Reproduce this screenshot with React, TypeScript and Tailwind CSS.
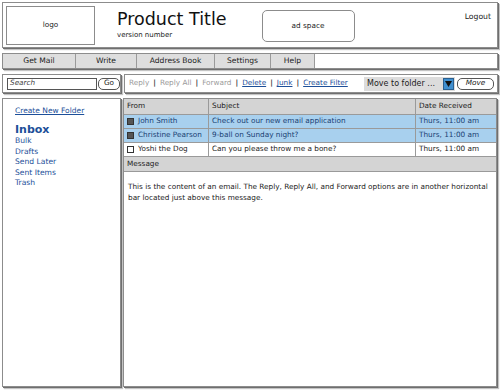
import React from 'react';

const panel = 'border border-[#8c8c8c] bg-white shadow-[1px_1px_0_#6f6f6f,2px_2px_1px_#c4c4c4]';
const link = 'text-[#1d4f99] underline';

interface Mail {
  from: string;
  subject: string;
  date: string;
  unread: boolean;
}

const mails: Mail[] = [
  { from: 'John Smith', subject: 'Check out our new email application', date: 'Thurs, 11:00 am', unread: true },
  { from: 'Christine Pearson', subject: '9-ball on Sunday night?', date: 'Thurs, 11:00 am', unread: true },
  { from: 'Yoshi the Dog', subject: 'Can you please throw me a bone?', date: 'Thurs, 11:00 am', unread: false },
];

const navItems = [
  { label: 'Get Mail', w: 'w-[73px]' },
  { label: 'Write', w: 'w-[61px]' },
  { label: 'Address Book', w: 'w-[78px]' },
  { label: 'Settings', w: 'w-[56px]' },
  { label: 'Help', w: 'w-[44px]' },
];

const folders = ['Bulk', 'Drafts', 'Send Later', 'Sent Items', 'Trash'];

function Sep() {
  return <span className="mx-[4px] text-[#444] font-bold">|</span>;
}

export default function App(): JSX.Element {
  return (
    <div className="w-[500px] h-[390px] bg-white text-[#222] flex flex-col px-[2px] pt-[2px] font-['DejaVu_Sans',sans-serif] text-[7.3px] whitespace-nowrap overflow-hidden">
      {/* header */}
      <div className={`${panel} h-[46px] flex items-start pl-[3px] pt-[3px] pr-[6px]`}>
        <div className="w-[89px] h-[39px] border border-[#8c8c8c] flex items-center justify-center">logo</div>
        <div className="ml-[22px] mt-[5px] leading-none">
          <div className="text-[17.5px] text-[#111]">Product Title</div>
          <div className="text-[7px] mt-[3px]">version number</div>
        </div>
        <div className="ml-[35px] mt-[4px] w-[93px] h-[32px] border border-[#8c8c8c] rounded-[5px] flex items-center justify-center">ad space</div>
        <div className="ml-auto mt-[5px] text-[7.7px]">Logout</div>
      </div>

      {/* nav */}
      <div className={`${panel} mt-[5px] h-[16px] flex text-[7.6px]`}>
        {navItems.map((n) => (
          <div key={n.label} className={`${n.w} h-full bg-[#dedede] border-r border-[#9a9a9a] flex items-center justify-center`}>
            {n.label}
          </div>
        ))}
        <div className="flex-1" />
      </div>

      {/* toolbar */}
      <div className="mt-[5px] h-[19px] flex gap-[3px]">
        <div className={`${panel} w-[119px] flex items-center pl-[4px] gap-[1px]`}>
          <div className="w-[90px] h-[12px] border border-[#555] flex items-center px-[2px] italic text-[#444]">Search</div>
          <div className="w-[22px] h-[12px] border border-[#555] rounded-[5px] flex items-center justify-center">Go</div>
        </div>
        <div className={`${panel} flex-1 flex items-center pl-[4px] pr-[3px]`}>
          <span className="text-[#9a9a9a]">Reply</span>
          <Sep />
          <span className="text-[#9a9a9a]">Reply All</span>
          <Sep />
          <span className="text-[#9a9a9a]">Forward</span>
          <Sep />
          <span className={link}>Delete</span>
          <Sep />
          <span className={link}>Junk</span>
          <Sep />
          <span className={link}>Create Filter</span>
          <div className="ml-auto flex items-center gap-[2px]">
            <div className="w-[91px] h-[14px] bg-[#dcdcdc] flex items-center pl-[3px] text-[8px]">
              <span className="flex-1">Move to folder ...</span>
              <span className="w-[11px] h-[12px] bg-[#3f8fd0] border border-[#2a5f8f] flex items-center justify-center mr-[1px]">
                <svg width="7" height="6" viewBox="0 0 7 6"><path d="M0 0h7L3.5 6z" fill="#111" /></svg>
              </span>
            </div>
            <div className="w-[37px] h-[12px] border border-[#555] rounded-[5px] flex items-center justify-center italic">Move</div>
          </div>
        </div>
      </div>

      {/* main */}
      <div className="mt-[5px] h-[289px] flex gap-[2px] mr-[1px]">
        <div className={`${panel} w-[119px] pl-[12px] pt-[6px] text-[#1d4f99]`}>
          <div className="underline text-[7.5px]">Create New Folder</div>
          <div className="mt-[8px] text-[11px] font-bold leading-none">Inbox</div>
          <div className="mt-[1px] text-[7.6px] leading-[10.5px]">
            {folders.map((f) => (
              <div key={f}>{f}</div>
            ))}
          </div>
        </div>
        <div className={`${panel} flex-1 flex flex-col`}>
          <div className="flex h-[16px] bg-[#d4d4d4] border-b border-[#9a9a9a]">
            <div className="w-[85px] border-r border-[#9a9a9a] flex items-center pl-[3px]">From</div>
            <div className="w-[207px] border-r border-[#9a9a9a] flex items-center pl-[3px]">Subject</div>
            <div className="flex-1 flex items-center pl-[3px]">Date Received</div>
          </div>
          {mails.map((m) => (
            <div key={m.from} className={`flex h-[14px] border-b border-[#9a9a9a] ${m.unread ? 'bg-[#a8d0ee] text-[#1a3f73]' : 'bg-white text-[#222]'}`}>
              <div className="w-[85px] border-r border-[#9a9a9a] flex items-center pl-[3px] gap-[4px]">
                <span className={`w-[7px] h-[7px] border border-[#333] ${m.unread ? 'bg-[#555]' : 'bg-white'}`} />
                {m.from}
              </div>
              <div className="w-[207px] border-r border-[#9a9a9a] flex items-center pl-[3px]">{m.subject}</div>
              <div className="flex-1 flex items-center pl-[3px]">{m.date}</div>
            </div>
          ))}
          <div className="h-[15px] bg-[#d4d4d4] border-b border-[#9a9a9a] flex items-center pl-[3px]">Message</div>
          <div className="px-[4px] pt-[9px] leading-[11px] whitespace-normal">
            This is the content of an email. The Reply, Reply All, and Forward options are in another horizontal bar located just above this message.
          </div>
        </div>
      </div>
    </div>
  );
}
